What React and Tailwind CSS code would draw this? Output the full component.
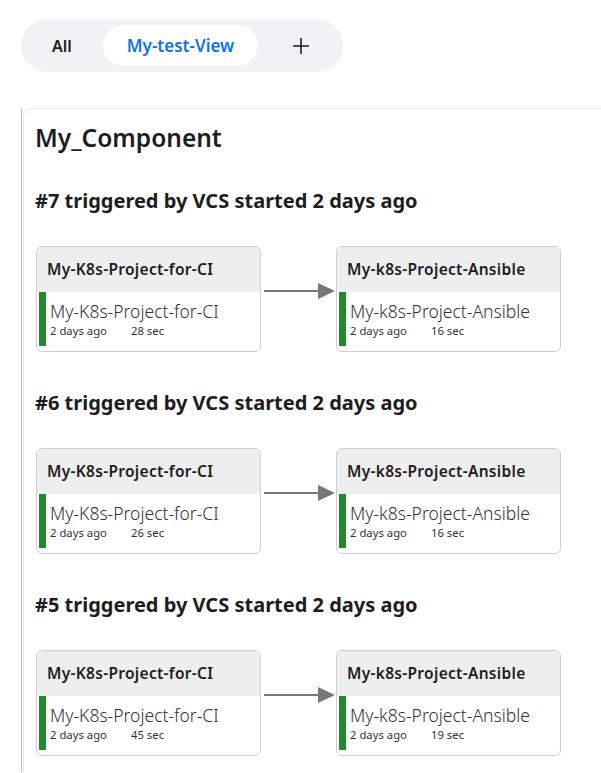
const runs = [
  { id: 7, left: "28 sec", right: "16 sec" },
  { id: 6, left: "26 sec", right: "16 sec" },
  { id: 5, left: "45 sec", right: "19 sec" },
];

const font = { fontFamily: '"Noto Sans", "Open Sans", sans-serif' };

const BuildCard = ({ title, time }) => (
  <div className="w-[225px] h-[106px] rounded-md border border-[#cfcfcf] bg-white overflow-hidden shrink-0">
    <div className="h-[45px] bg-[#eeeeee] flex items-center px-[10px] text-[15.5px] tracking-[0.3px] font-semibold text-[#1d1d1f]">
      {title}
    </div>
    <div className="flex pl-[2px]">
      <div className="w-[7px] h-[54px] bg-[#218a2a]" />
      <div className="pl-[4px]">
        <div className="text-[17.5px] font-light text-[#333] leading-[24px] mt-[7px]">{title}</div>
        <div className="flex text-[11.3px] text-[#333] leading-[14px] mt-[1px]">
          <span className="w-[81px]">2 days ago</span>
          <span>{time}</span>
        </div>
      </div>
    </div>
  </div>
);

const Arrow = () => (
  <div className="w-[75px] flex items-start justify-center pt-[35px]">
    <svg width="74" height="20" viewBox="0 0 74 20">
      <line x1="2" y1="10" x2="58" y2="10" stroke="#777" strokeWidth="2.2" />
      <polygon points="56,2 73,10 56,18" fill="#777" />
    </svg>
  </div>
);

export default function App() {
  return (
    <div className="min-h-screen bg-white text-[#1d1d1f]" style={font}>
      <div className="pt-[19px] pl-[21px]">
        <div className="w-[322px] h-[53px] rounded-full bg-[#f2f2f6] flex items-center">
          <div className="w-[82px] text-center text-[16px] font-semibold text-[#1d1d1f]">All</div>
          <div className="w-[155px] h-[41px] rounded-full bg-white flex items-center justify-center text-[17px] font-semibold text-[#0f74e3]">
            My-test-View
          </div>
          <div className="flex-1 flex justify-center">
            <svg width="18" height="18" viewBox="0 0 18 18">
              <path d="M9 1v16M1 9h16" stroke="#1d1d1f" strokeWidth="1.6" />
            </svg>
          </div>
        </div>
      </div>
      <div className="mt-[36px] ml-[21px] border-l border-[#bdbdbd]">
        <div className="ml-[1px] border-t border-l border-[#ececec] rounded-tl-lg pl-[12px] pt-[13px] pb-[16px]">
          <h1 className="text-[24.5px] font-semibold leading-[32px] text-[#1d1d1f] -ml-[1px]">My_Component</h1>
          {runs.map((run, i) => (
            <div key={run.id} className={i === 0 ? "mt-[33px]" : "mt-[37px]"}>
              <h2 className="text-[20px] font-bold leading-[28px] text-[#1d1d1f] -ml-[1px]">
                #{run.id} triggered by VCS started 2 days ago
              </h2>
              <div className="flex mt-[31px]">
                <BuildCard title="My-K8s-Project-for-CI" time={run.left} />
                <Arrow />
                <BuildCard title="My-k8s-Project-Ansible" time={run.right} />
              </div>
            </div>
          ))}
        </div>
      </div>
    </div>
  );
}
